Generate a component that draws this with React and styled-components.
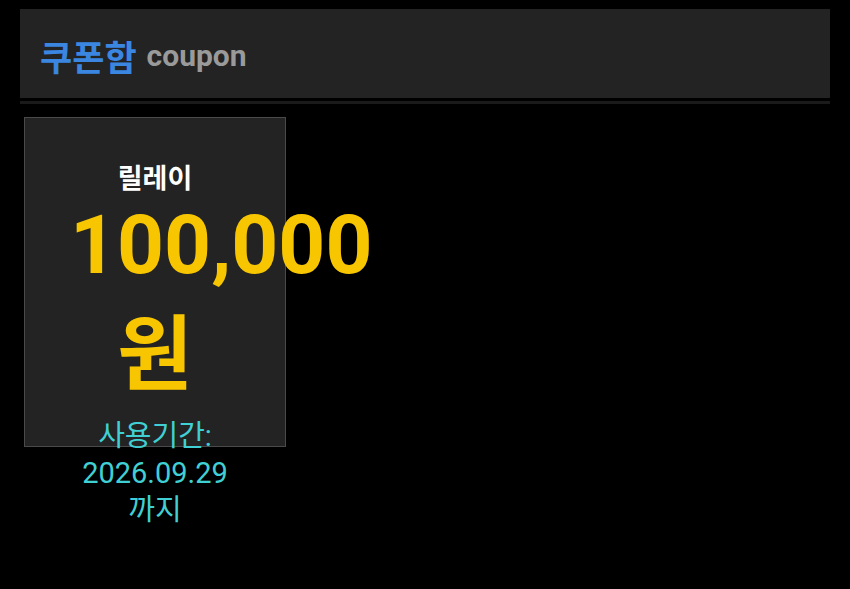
import React from 'react';
import styled, { createGlobalStyle } from 'styled-components';

const GlobalStyle = createGlobalStyle`
    html, body {
        margin: 0;
        padding: 0;
        background: #000;
    }
    body {
        font-family: Roboto, "Noto Sans CJK KR", sans-serif;
    }
`;

const Page = styled.div`
    display: flex;
    flex-direction: column;
    padding: 9px 20px 0 20px;
    min-height: 580px;
`;

const Header = styled.div`
    display: flex;
    align-items: center;
    height: 92px;
    padding: 4px 20px 0 20px;
    box-sizing: border-box;
    background: #232323;
    border-bottom: 3px solid #000;
    box-shadow: 0 3px 0 #1a1a1a;
`;

const Title = styled.span`
    font-family: Roboto, "Noto Sans CJK KR", sans-serif;
    font-size: 35px;
    font-weight: bold;
    color: #3a86e0;
    margin-right: 10px;
`;

const SubTitle = styled.span`
    font-family: Roboto, sans-serif;
    font-size: 30px;
    font-weight: bold;
    color: #9a9a9a;
`;

const List = styled.div`
    display: flex;
    flex-wrap: wrap;
    padding: 16px 4px;
`;

const Card = styled.div`
    box-sizing: border-box;
    width: 262px;
    height: 330px;
    padding: 43px 45px 0 45px;
    background: #232323;
    border: 1px solid #4a4a4a;
    text-align: center;
`;

const Name = styled.div`
    font-family: Roboto, "Noto Sans CJK KR", sans-serif;
    font-size: 27px;
    font-weight: bold;
    color: #fff;
    line-height: 36px;
`;

const Amount = styled.div`
    font-family: Roboto, "Noto Sans CJK KR", sans-serif;
    font-size: 82px;
    font-weight: bold;
    color: #f7c600;
    line-height: 110px;
    margin-top: -7px;
`;

const Period = styled.div`
    font-family: Roboto, "Noto Sans CJK KR", sans-serif;
    font-size: 29px;
    color: #40d0d4;
    line-height: 37px;
    margin-top: 8px;
`;

const coupons = [
    { name: '릴레이', amount: '100,000', expire: '2026.09.29' },
];

function App() {
    return (
        <>
            <GlobalStyle />
            <Page>
                <Header>
                    <Title>쿠폰함</Title>
                    <SubTitle>coupon</SubTitle>
                </Header>
                <List>
                    {coupons.map((c) => (
                        <Card key={c.name}>
                            <Name>{c.name}</Name>
                            <Amount>{c.amount} 원</Amount>
                            <Period>사용기간: {c.expire} 까지</Period>
                        </Card>
                    ))}
                </List>
            </Page>
        </>
    );
}

export default App;
